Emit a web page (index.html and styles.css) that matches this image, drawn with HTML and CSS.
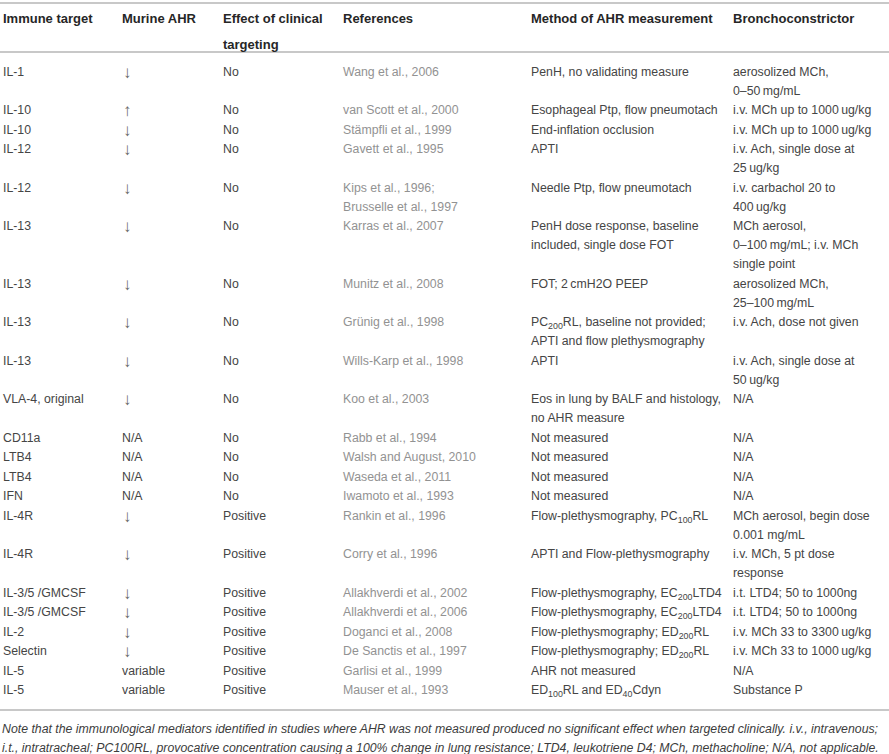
FILE: index.html
```html
<!DOCTYPE html>
<html>
<head>
<meta charset="utf-8">
<link rel="stylesheet" href="styles.css">
</head>
<body>
<div class="page">
<table class="tbl">
<colgroup>
<col class="c1"><col class="c2"><col class="c3"><col class="c4"><col class="c5"><col class="c6">
</colgroup>
<thead>
<tr><th><div class="h">Immune target</div></th><th><div class="h">Murine AHR</div></th><th><div class="h">Effect of clinical<br>targeting</div></th><th><div class="h">References</div></th><th><div class="h">Method of AHR measurement</div></th><th><div class="h">Bronchoconstrictor</div></th></tr>
</thead>
<tbody>
<tr class="first"><td>IL-1</td><td><span class="arr">↓</span></td><td>No</td><td class="ref">Wang et al., 2006</td><td>PenH, no validating measure</td><td>aerosolized MCh,<br>0–50&#8201;mg/mL</td></tr>
<tr><td>IL-10</td><td><span class="arr">↑</span></td><td>No</td><td class="ref">van Scott et al., 2000</td><td>Esophageal Ptp, flow pneumotach</td><td>i.v. MCh up to 1000&#8201;ug/kg</td></tr>
<tr><td>IL-10</td><td><span class="arr">↓</span></td><td>No</td><td class="ref">Stämpfli et al., 1999</td><td>End-inflation occlusion</td><td>i.v. MCh up to 1000&#8201;ug/kg</td></tr>
<tr><td>IL-12</td><td><span class="arr">↓</span></td><td>No</td><td class="ref">Gavett et al., 1995</td><td>APTI</td><td>i.v. Ach, single dose at<br>25&#8201;ug/kg</td></tr>
<tr><td>IL-12</td><td><span class="arr">↓</span></td><td>No</td><td class="ref">Kips et al., 1996;<br>Brusselle et al., 1997</td><td>Needle Ptp, flow pneumotach</td><td>i.v. carbachol 20 to<br>400&#8201;ug/kg</td></tr>
<tr><td>IL-13</td><td><span class="arr">↓</span></td><td>No</td><td class="ref">Karras et al., 2007</td><td>PenH dose response, baseline<br>included, single dose FOT</td><td>MCh aerosol,<br>0–100&#8201;mg/mL; i.v. MCh<br>single point</td></tr>
<tr><td>IL-13</td><td><span class="arr">↓</span></td><td>No</td><td class="ref">Munitz et al., 2008</td><td>FOT; 2&#8201;cmH2O PEEP</td><td>aerosolized MCh,<br>25–100&#8201;mg/mL</td></tr>
<tr><td>IL-13</td><td><span class="arr">↓</span></td><td>No</td><td class="ref">Grünig et al., 1998</td><td>PC<sub>200</sub>RL, baseline not provided;<br>APTI and flow plethysmography</td><td>i.v. Ach, dose not given</td></tr>
<tr><td>IL-13</td><td><span class="arr">↓</span></td><td>No</td><td class="ref">Wills-Karp et al., 1998</td><td>APTI</td><td>i.v. Ach, single dose at<br>50&#8201;ug/kg</td></tr>
<tr><td>VLA-4, original</td><td><span class="arr">↓</span></td><td>No</td><td class="ref">Koo et al., 2003</td><td>Eos in lung by BALF and histology,<br>no AHR measure</td><td>N/A</td></tr>
<tr><td>CD11a</td><td>N/A</td><td>No</td><td class="ref">Rabb et al., 1994</td><td>Not measured</td><td>N/A</td></tr>
<tr><td>LTB4</td><td>N/A</td><td>No</td><td class="ref">Walsh and August, 2010</td><td>Not measured</td><td>N/A</td></tr>
<tr><td>LTB4</td><td>N/A</td><td>No</td><td class="ref">Waseda et al., 2011</td><td>Not measured</td><td>N/A</td></tr>
<tr><td>IFN</td><td>N/A</td><td>No</td><td class="ref">Iwamoto et al., 1993</td><td>Not measured</td><td>N/A</td></tr>
<tr><td>IL-4R</td><td><span class="arr">↓</span></td><td>Positive</td><td class="ref">Rankin et al., 1996</td><td>Flow-plethysmography, PC<sub>100</sub>RL</td><td>MCh aerosol, begin dose<br>0.001 mg/mL</td></tr>
<tr><td>IL-4R</td><td><span class="arr">↓</span></td><td>Positive</td><td class="ref">Corry et al., 1996</td><td>APTI and Flow-plethysmography</td><td>i.v. MCh, 5 pt dose<br>response</td></tr>
<tr><td>IL-3/5 /GMCSF</td><td><span class="arr">↓</span></td><td>Positive</td><td class="ref">Allakhverdi et al., 2002</td><td>Flow-plethysmography, EC<sub>200</sub>LTD4</td><td>i.t. LTD4; 50 to 1000ng</td></tr>
<tr><td>IL-3/5 /GMCSF</td><td><span class="arr">↓</span></td><td>Positive</td><td class="ref">Allakhverdi et al., 2006</td><td>Flow-plethysmography, EC<sub>200</sub>LTD4</td><td>i.t. LTD4; 50 to 1000ng</td></tr>
<tr><td>IL-2</td><td><span class="arr">↓</span></td><td>Positive</td><td class="ref">Doganci et al., 2008</td><td>Flow-plethysmography; ED<sub>200</sub>RL</td><td>i.v. MCh 33 to 3300&#8201;ug/kg</td></tr>
<tr><td>Selectin</td><td><span class="arr">↓</span></td><td>Positive</td><td class="ref">De Sanctis et al., 1997</td><td>Flow-plethysmography; ED<sub>200</sub>RL</td><td>i.v. MCh 33 to 1000&#8201;ug/kg</td></tr>
<tr><td>IL-5</td><td>variable</td><td>Positive</td><td class="ref">Garlisi et al., 1999</td><td>AHR not measured</td><td>N/A</td></tr>
<tr class="last"><td>IL-5</td><td>variable</td><td>Positive</td><td class="ref">Mauser et al., 1993</td><td>ED<sub>100</sub>RL and ED<sub>40</sub>Cdyn</td><td>Substance P</td></tr>
</tbody>
</table>
<p class="note">Note that the immunological mediators identified in studies where AHR was not measured produced no significant effect when targeted clinically. i.v., intravenous;<br>i.t., intratracheal; PC100RL, provocative concentration causing a 100% change in lung resistance; LTD4, leukotriene D4; MCh, methacholine; N/A, not applicable.</p>
</div>
</body>
</html>
```

FILE: styles.css
```css
html, body {
  margin: 0;
  padding: 0;
  background: #ffffff;
}

.page {
  width: 889px;
  font-family: "Liberation Sans", Arial, sans-serif;
  color: #454545;
}

.tbl {
  width: 889px;
  border-collapse: collapse;
  table-layout: fixed;
  margin-top: 2px;
}

.c1 { width: 122px; }
.c2 { width: 101px; }
.c3 { width: 120px; }
.c4 { width: 188px; }
.c5 { width: 202px; }
.c6 { width: 156px; }

.tbl thead tr {
  border-top: 2px solid #c8c8c8;
  border-bottom: 2px solid #c8c8c8;
}

.tbl th {
  text-align: left;
  vertical-align: top;
  font-weight: bold;
  font-size: 13px;
  color: #262626;
  padding: 0;
  white-space: nowrap;
}

.tbl th .h {
  height: 45px;
  padding-top: 2px;
  line-height: 26px;
}

.tbl td {
  vertical-align: top;
  font-size: 12.3px;
  line-height: 19px;
  padding: 0.5px 0 0 0;
  white-space: nowrap;
}

.tbl th:first-child,
.tbl td:first-child {
  padding-left: 3px;
}

.tbl tr.first td { padding-top: 9.5px; }
.tbl tr.last td { padding-bottom: 9px; }

.tbl tbody tr.last {
  border-bottom: 2px solid #c8c8c8;
}

.tbl td.ref {
  color: #929292;
}

.arr {
  display: inline-block;
  font-size: 17px;
  line-height: 0;
  margin-left: 1px;
  color: #6a6a6a;
  font-weight: normal;
  vertical-align: -2px;
}

sub {
  font-size: 0.72em;
  line-height: 0;
  vertical-align: -0.3em;
}

.note {
  margin: 9px 0 0 2px;
  font-family: "Liberation Sans", Arial, sans-serif;
  font-style: italic;
  font-size: 12.3px;
  line-height: 18.5px;
  color: #3c3c3c;
  white-space: nowrap;
}
```
